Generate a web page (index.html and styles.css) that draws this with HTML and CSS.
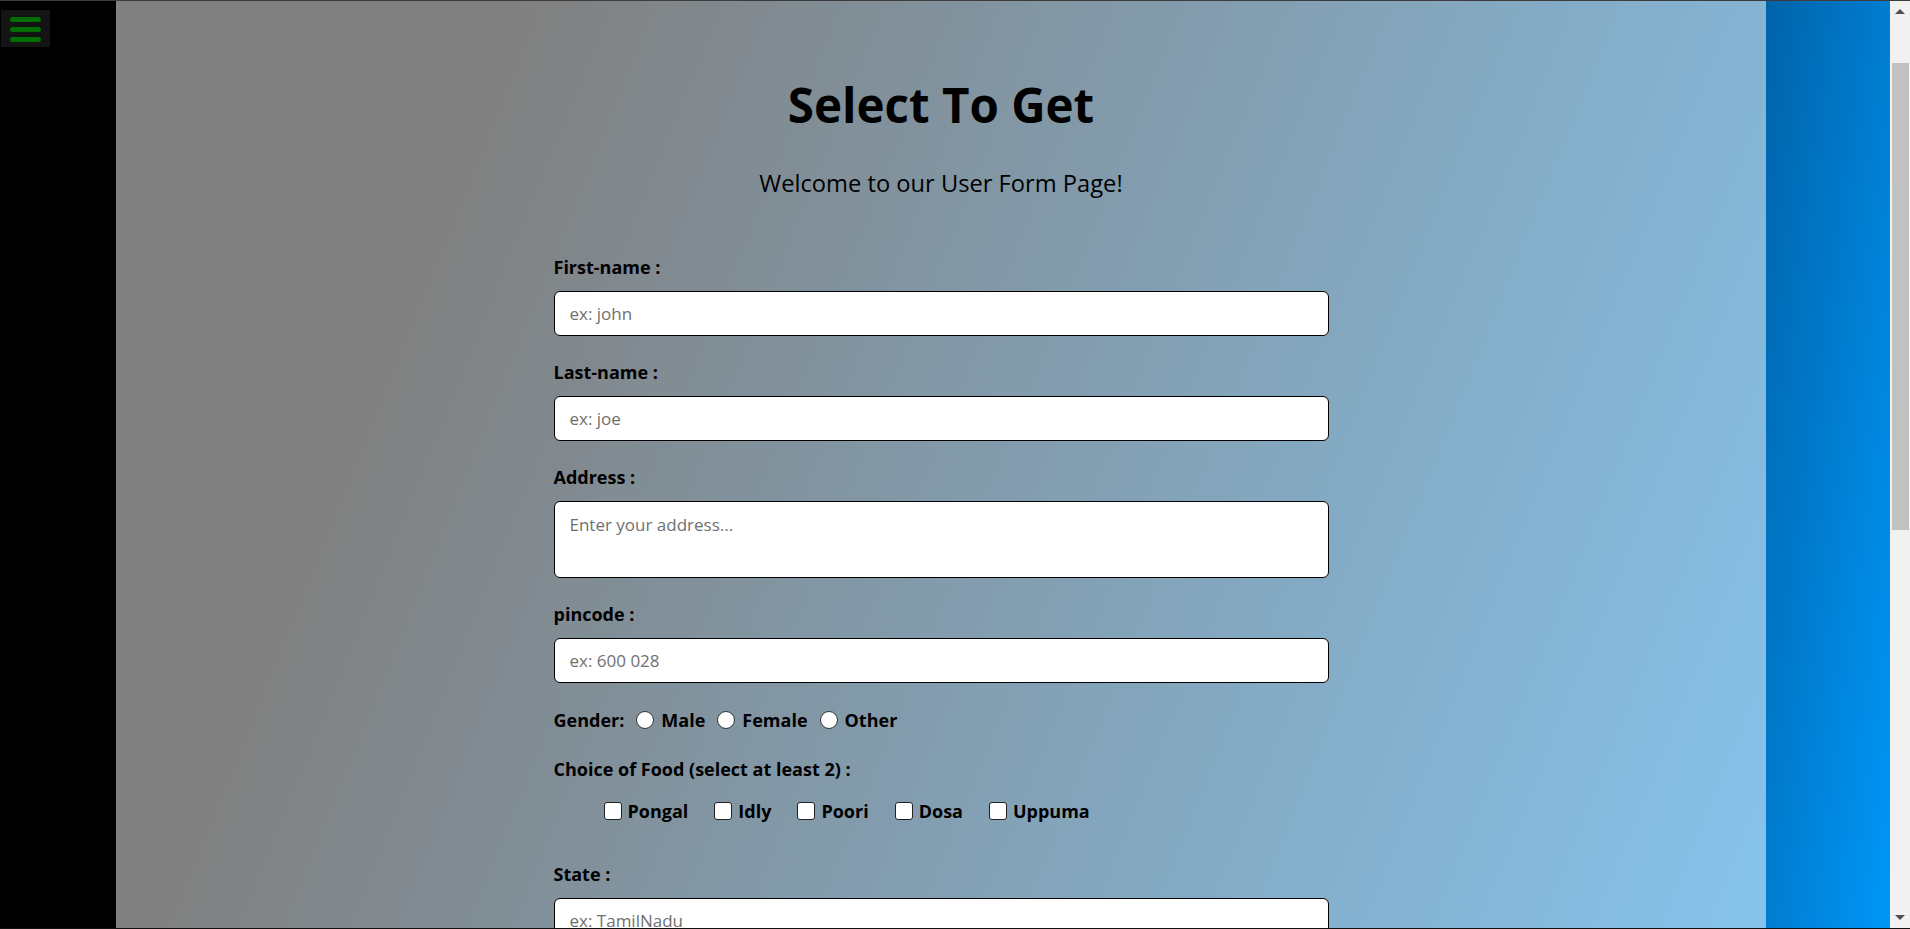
FILE: index.html
```html
<!DOCTYPE html>
<html lang="en">
<head>
<meta charset="utf-8">
<title>Select To Get</title>
<link rel="stylesheet" href="styles.css">
</head>
<body>
<div class="window">
  <aside class="sidebar">
    <button class="menu-btn" type="button" aria-label="Menu">
      <span class="bar"></span><span class="bar"></span><span class="bar"></span>
    </button>
  </aside>

  <main class="content">
    <h1 class="title">Select To Get</h1>
    <p class="welcome">Welcome to our User Form Page!</p>

    <form class="user-form">
      <div class="field">
        <label class="field-label" for="fname">First-name :</label>
        <input class="text-input" id="fname" type="text" placeholder="ex: john">
      </div>
      <div class="field">
        <label class="field-label" for="lname">Last-name :</label>
        <input class="text-input" id="lname" type="text" placeholder="ex: joe">
      </div>
      <div class="field">
        <label class="field-label" for="address">Address :</label>
        <textarea class="text-area" id="address" placeholder="Enter your address..."></textarea>
      </div>
      <div class="field">
        <label class="field-label" for="pincode">pincode :</label>
        <input class="text-input" id="pincode" type="text" placeholder="ex: 600 028">
      </div>

      <div class="gender-row">
        <span class="gender-title">Gender:</span>
        <label class="opt"><input class="radio" type="radio" name="gender">Male</label>
        <label class="opt"><input class="radio" type="radio" name="gender">Female</label>
        <label class="opt"><input class="radio" type="radio" name="gender">Other</label>
      </div>

      <p class="food-title">Choice of Food (select at least 2) :</p>
      <div class="food-row">
        <label class="food"><input class="check" type="checkbox">Pongal</label>
        <label class="food"><input class="check" type="checkbox">Idly</label>
        <label class="food"><input class="check" type="checkbox">Poori</label>
        <label class="food"><input class="check" type="checkbox">Dosa</label>
        <label class="food"><input class="check" type="checkbox">Uppuma</label>
      </div>

      <div class="field field-state">
        <label class="field-label" for="state">State :</label>
        <input class="text-input" id="state" type="text" placeholder="ex: TamilNadu">
      </div>
    </form>
  </main>

  <aside class="right-panel"></aside>

  <div class="scrollbar" aria-hidden="true">
    <div class="sb-btn"><span class="arrow-up"></span></div>
    <div class="sb-thumb"></div>
    <div class="sb-btn sb-btn-down"><span class="arrow-down"></span></div>
  </div>
</div>
</body>
</html>
```

FILE: styles.css
```css
html, body {
  margin: 0;
  height: 100%;
}

body {
  font-family: "Open Sans", "Noto Sans", sans-serif;
  color: #000;
  overflow: hidden;
}

.window {
  display: flex;
  height: 929px;
  box-sizing: border-box;
  border-top: 1px solid #3c3c3c;
  border-bottom: 1px solid #111;
}

/* left sidebar */
.sidebar {
  width: 116px;
  flex: none;
  background: #000;
  padding: 9px 0 0 1px;
  box-sizing: border-box;
}

.menu-btn {
  width: 49px;
  height: 37px;
  box-sizing: border-box;
  padding: 7px 9px 5px;
  margin: 0;
  border: 0;
  background: #141414;
  display: flex;
  flex-direction: column;
  gap: 5px;
}

.bar {
  display: block;
  width: 31px;
  height: 5px;
  border-radius: 3px;
  background: #006e00;
}

/* main content */
.content {
  width: 1650px;
  flex: none;
  box-sizing: border-box;
  padding-top: 76px;
  overflow: hidden;
  background: linear-gradient(112deg, #808080 20%, #86c3ec 100%);
}

.title {
  margin: 0;
  text-align: center;
  font-size: 47.5px;
  line-height: 56px;
  font-weight: 700;
}

.welcome {
  margin: 35px 0 0;
  text-align: center;
  font-size: 23.7px;
  line-height: 30px;
}

.user-form {
  width: 775px;
  margin: 58px auto 0;
}

.field {
  margin-bottom: 25px;
}

.field-label {
  display: block;
  font-size: 18px;
  line-height: 22px;
  font-weight: 700;
  margin-bottom: 13px;
}

.text-input,
.text-area {
  display: block;
  width: 100%;
  box-sizing: border-box;
  margin: 0;
  border: 1px solid #000;
  border-radius: 6px;
  background: #fff;
  font-family: "Open Sans", "Noto Sans", sans-serif;
  font-size: 17px;
  color: #000;
  outline: none;
}

.text-input {
  height: 45px;
  padding: 0 15px;
}

.text-area {
  height: 77px;
  padding: 11px 15px;
  line-height: 24px;
  resize: none;
}

.text-input::placeholder,
.text-area::placeholder {
  color: #707070;
}

.gender-row {
  display: flex;
  align-items: center;
  height: 24px;
  margin-top: 1px;
  font-size: 18px;
  font-weight: 700;
}

.opt {
  display: flex;
  align-items: center;
}

.radio {
  appearance: none;
  width: 18px;
  height: 18px;
  margin: 0 7px 0 12px;
  border: 1px solid #333;
  border-radius: 50%;
  background: #fff;
}

.food-title {
  margin: 25px 0 0;
  font-size: 18px;
  line-height: 24px;
  font-weight: 700;
}

.food-row {
  display: flex;
  align-items: center;
  gap: 26px;
  height: 24px;
  margin-top: 18px;
  padding-left: 50px;
  font-size: 18px;
  font-weight: 700;
}

.food {
  display: flex;
  align-items: center;
}

.check {
  appearance: none;
  width: 18px;
  height: 18px;
  margin: 0 6px 0 0;
  border: 1px solid #222;
  border-radius: 3px;
  background: #fff;
}

.field-state {
  margin-top: 40px;
}

/* right panel */
.right-panel {
  width: 124px;
  flex: none;
  background: linear-gradient(to bottom right, #0063a9, #0097f8);
}

/* scrollbar */
.scrollbar {
  width: 20px;
  flex: none;
  background: #f1f1f1;
  display: flex;
  flex-direction: column;
}

.sb-btn {
  height: 21px;
  display: flex;
  align-items: center;
  justify-content: center;
}

.sb-btn-down {
  margin-top: auto;
}

.arrow-up {
  width: 0;
  height: 0;
  border-left: 5px solid transparent;
  border-right: 5px solid transparent;
  border-bottom: 5px solid #505050;
}

.arrow-down {
  width: 0;
  height: 0;
  border-left: 5px solid transparent;
  border-right: 5px solid transparent;
  border-top: 5px solid #505050;
}

.sb-thumb {
  height: 467px;
  margin: 41px 1px 0 2px;
  background: #c1c1c1;
}
```
